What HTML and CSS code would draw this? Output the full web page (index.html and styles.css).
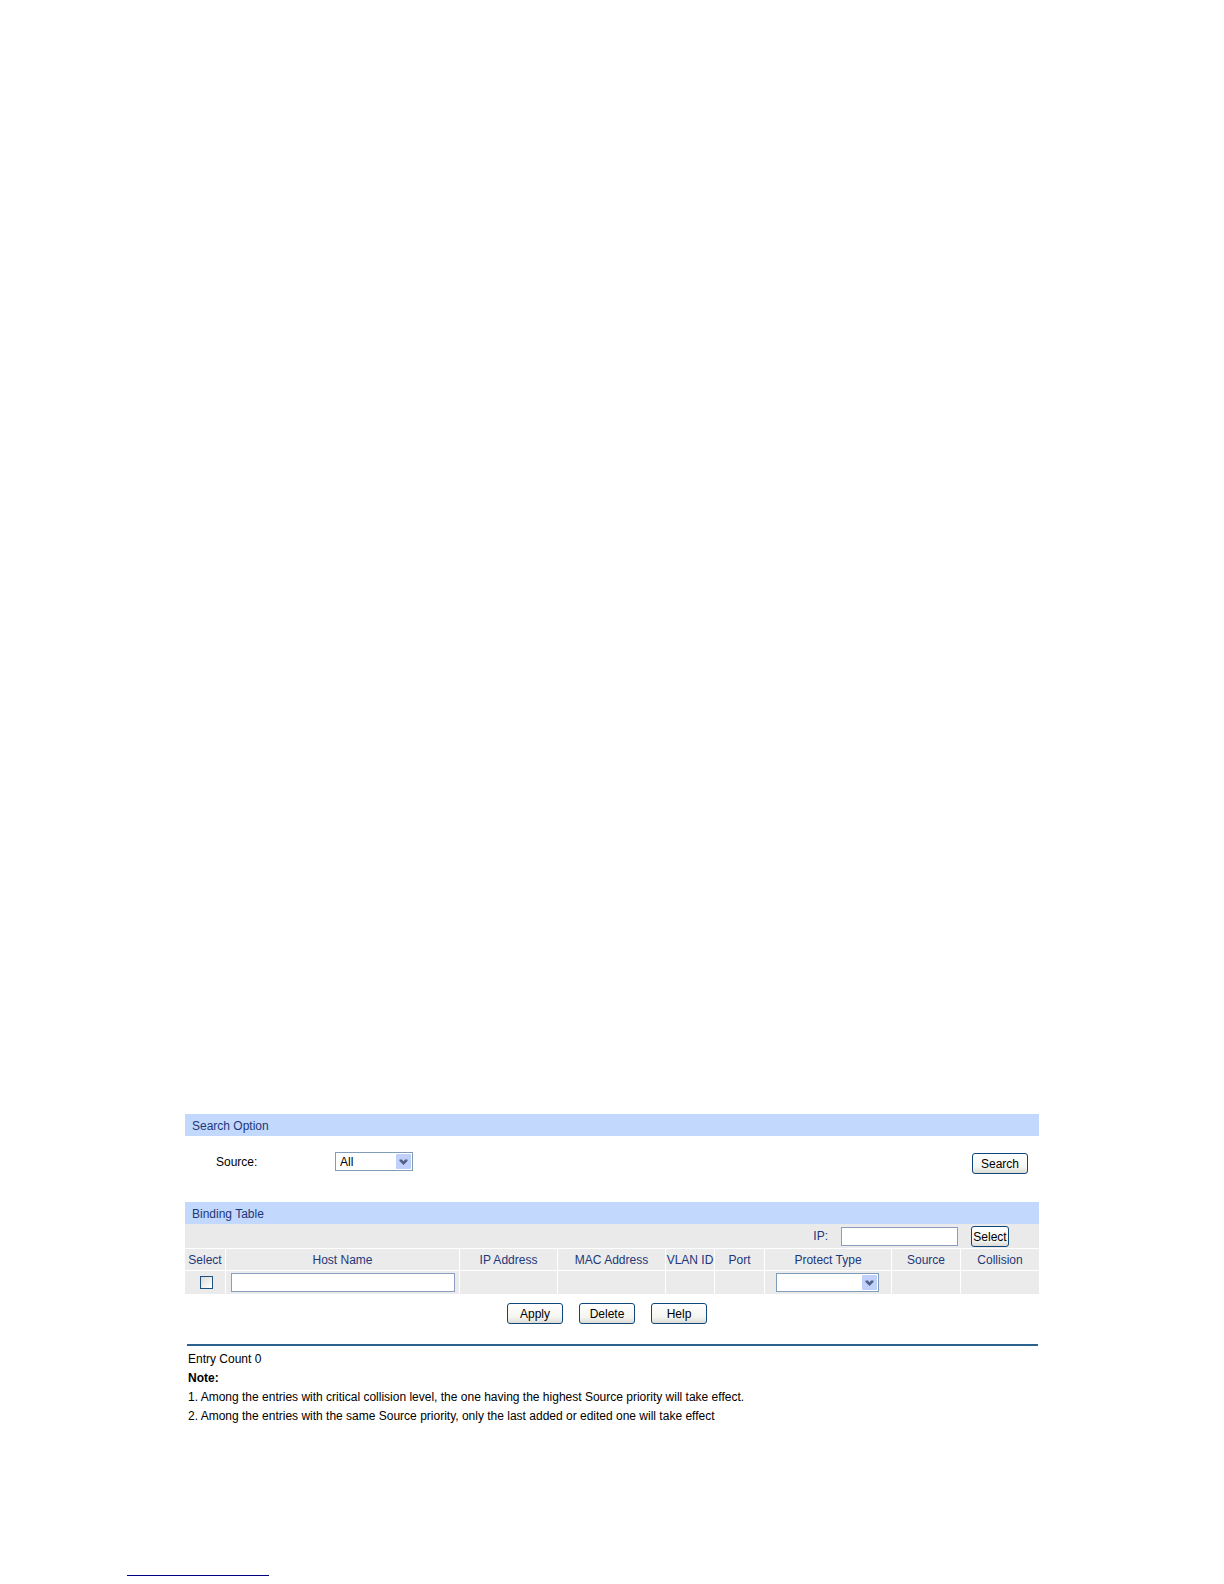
FILE: index.html
```html
<!DOCTYPE html>
<html lang="en">
<head>
<meta charset="utf-8">
<title>Binding Table</title>
<link rel="stylesheet" href="styles.css">
</head>
<body>
<main class="content">
  <section>
    <h2 class="bar">Search Option</h2>
    <form class="search">
      <label class="search-label" for="source">Source:</label>
      <span class="combo combo-source">
        <select id="source"><option>All</option></select>
        <svg class="arrow" viewBox="0 0 15 15" aria-hidden="true"><rect width="15" height="15" rx="1" fill="#c1d0fa"/><path d="M3.500 5.500h2.500L7.500 7.500 9 5.500h2.500v1.500L7.500 11 3.500 7z" fill="#4d6185"/></svg>
      </span>
      <button class="btn btn-search" type="button">Search</button>
    </form>
  </section>
  <section>
    <h2 class="bar">Binding Table</h2>
    <div class="toolbar">
      <label for="ip">IP:</label>
      <input class="field field-ip" id="ip" type="text">
      <button class="btn btn-tight" type="button">Select</button>
    </div>
    <table class="grid">
      <colgroup>
        <col class="c-select"><col><col class="c-ip"><col class="c-mac"><col class="c-vlan"><col class="c-port"><col class="c-protect"><col class="c-source"><col class="c-collision">
      </colgroup>
      <thead>
        <tr><th>Select</th><th>Host Name</th><th>IP Address</th><th>MAC Address</th><th>VLAN ID</th><th>Port</th><th>Protect Type</th><th>Source</th><th>Collision</th></tr>
      </thead>
      <tbody>
        <tr>
          <td class="pick"><input class="check" type="checkbox" aria-label="Select all"></td>
          <td class="host"><input class="field field-host" type="text" aria-label="Host Name"></td>
          <td></td><td></td><td></td><td></td>
          <td class="protect">
            <div class="combo combo-protect">
              <select aria-label="Protect Type"><option></option></select>
              <svg class="arrow" viewBox="0 0 15 15" aria-hidden="true"><rect width="15" height="15" rx="1" fill="#c1d0fa"/><path d="M3.500 5.500h2.500L7.500 7.500 9 5.500h2.500v1.500L7.500 11 3.500 7z" fill="#4d6185"/></svg>
            </div>
          </td>
          <td></td><td></td>
        </tr>
      </tbody>
    </table>
    <div class="actions">
      <button class="btn" type="button">Apply</button>
      <button class="btn" type="button">Delete</button>
      <button class="btn" type="button">Help</button>
    </div>
  </section>
  <footer class="notes">
    <p>Entry Count 0</p>
    <p><strong>Note:</strong></p>
    <p>1. Among the entries with critical collision level, the one having the highest Source priority will take effect.</p>
    <p>2. Among the entries with the same Source priority, only the last added or edited one will take effect</p>
  </footer>
</main>
<hr class="page-rule">
</body>
</html>
```
FILE: styles.css
```css
* { box-sizing: border-box; }

body {
  margin: 0;
  background: #fff;
  color: #000;
  font: 12px/18px "Liberation Sans", Arial, sans-serif;
}

.content { padding: 1114px 185px 0; }

.bar {
  margin: 0;
  padding: 2px 7px 0;
  background: #c3d8fd;
  color: #1d3779;
  font-size: 12px;
  font-weight: 400;
  line-height: 20px;
}

.search {
  display: flex;
  align-items: flex-start;
  height: 66px;
  padding: 16px 11px 0 31px;
}

.search-label { width: 119px; line-height: 20px; }
.btn-search { margin: 1px 0 0 auto; }

.combo {
  position: relative;
  height: 19px;
}

.combo select {
  appearance: none;
  display: block;
  width: 100%;
  height: 100%;
  margin: 0;
  padding: 1px 18px 0 4px;
  border: 1px solid #7f9db9;
  border-radius: 0;
  background: #fff;
  color: #000;
  font: inherit;
  line-height: 16px;
}

.arrow {
  position: absolute;
  top: 2px;
  right: 2px;
  width: 15px;
  height: 15px;
  pointer-events: none;
}

.combo-source { width: 78px; }
.combo-protect { width: 103px; margin: 0 auto; }

.btn {
  width: 56px;
  height: 21px;
  padding: 1px 0 0;
  border: 1px solid #0f477c;
  border-radius: 3px;
  background: linear-gradient(#fff, #f4f4f0 70%, #dcdbd6);
  color: #000;
  font: inherit;
  line-height: 18px;
}

.btn-tight { width: 38px; }

.toolbar {
  display: flex;
  align-items: center;
  height: 24px;
  padding-right: 30px;
  justify-content: flex-end;
  background: #eaeaea;
  color: #1d3779;
}

.field {
  height: 19px;
  padding: 0 3px;
  border: 1px solid #8c9cc0;
  background: #fff;
  font: inherit;
}

.field-ip { width: 117px; margin: 0 13px 0 13px; }
.field-host { display: block; width: 100%; }

.grid {
  width: 100%;
  table-layout: fixed;
  border-collapse: separate;
  border-spacing: 0;
  color: #1d3779;
}

.grid th,
.grid td {
  padding: 0;
  border-top: 1px solid #fff;
  border-left: 1px solid #fff;
  background: #ebebeb;
  font-weight: 400;
  text-align: center;
  vertical-align: middle;
  white-space: nowrap;
}

.grid th { padding-top: 1px; line-height: 20px; }
.grid th:first-child,
.grid td:first-child { border-left: 0; }
.grid td { height: 24px; }
.grid .host { padding: 0 4px 0 5px; }
.grid .protect { padding-right: 2px; }
.grid .pick { padding-left: 2px; }

.c-select { width: 40px; }
.c-ip { width: 98px; }
.c-mac { width: 108px; }
.c-vlan { width: 49px; }
.c-port { width: 50px; }
.c-protect { width: 127px; }
.c-source { width: 69px; }
.c-collision { width: 79px; }

.check {
  appearance: none;
  display: block;
  width: 13px;
  height: 13px;
  margin: 0 auto;
  border: 1px solid #1c5180;
  background: linear-gradient(135deg, #dcdcd7, #fff);
}

.check:checked { background: #21a121; }

.actions {
  display: flex;
  justify-content: center;
  gap: 16px;
  padding: 9px 10px 20px 0;
}

.notes {
  margin: 0 1px 0 2px;
  padding-top: 4px;
  border-top: 2px solid #2c628f;
  line-height: 19px;
}

.notes p { margin: 0; padding-left: 1px; }

.page-rule {
  width: 142px;
  height: 1px;
  margin: 149px 0 8px 127px;
  border: 0;
  background: #000080;
}
```
